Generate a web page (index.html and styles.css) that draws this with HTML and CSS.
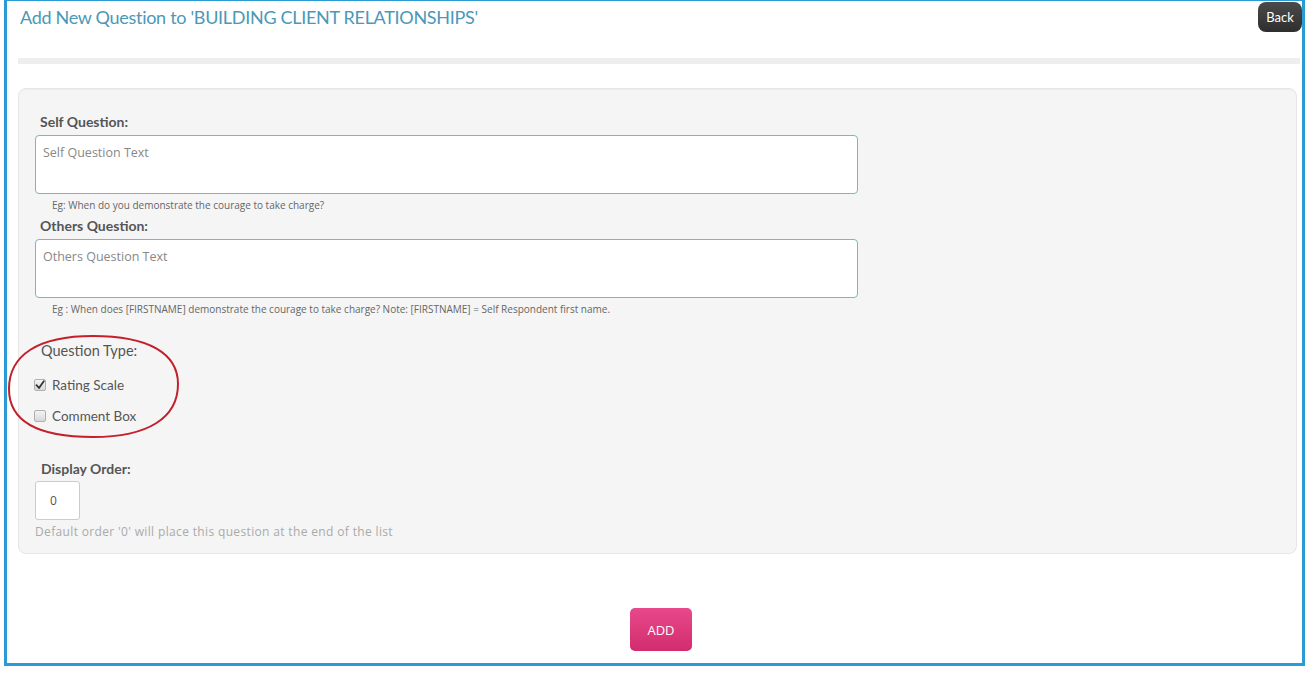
FILE: index.html
```html
<!DOCTYPE html>
<html>
<head>
    <title>Add New Question</title>
    <link rel="stylesheet" href="styles.css">
</head>
<body>
    <div class="frame">
        <div class="page-header">
            <h1>Add New Question to 'BUILDING CLIENT RELATIONSHIPS'</h1>
            <a class="back-btn" href="#">Back</a>
        </div>
        <div class="rule"></div>

        <form class="question-form">
            <div class="well">
                <label class="field-label" for="self-question">Self Question:</label>
                <textarea id="self-question" class="text-box" placeholder="Self Question Text"></textarea>
                <div class="hint">Eg: When do you demonstrate the courage to take charge?</div>

                <label class="field-label" for="others-question">Others Question:</label>
                <textarea id="others-question" class="text-box" placeholder="Others Question Text"></textarea>
                <div class="hint">Eg : When does [FIRSTNAME] demonstrate the courage to take charge? Note: [FIRSTNAME] = Self Respondent first name.</div>

                <div class="type-label">Question Type:</div>
                <label class="check-row first">
                    <span class="check-box checked">
                        <svg width="10" height="10" viewBox="0 0 10 10"><path d="M1.5 5.2 L4 8 L8.8 1.2" fill="none" stroke="#333" stroke-width="1.8" stroke-linecap="round" stroke-linejoin="round"/></svg>
                    </span>
                    Rating Scale
                </label>
                <label class="check-row">
                    <span class="check-box"></span>
                    Comment Box
                </label>

                <label class="field-label order-label" for="display-order">Display Order:</label>
                <input id="display-order" class="order-input" type="text" value="0">
                <div class="help">Default order '0' will place this question at the end of the list</div>
            </div>

            <div class="actions">
                <button type="submit" class="add-btn">ADD</button>
            </div>
        </form>

        <!-- red hand-drawn circle round the question type -->
        <svg class="mark" width="174" height="106" viewBox="0 0 174 106">
            <path d="M2 55 C2 21, 31 2, 86 2 C141 2, 171 19, 171 50 C171 84, 141 103, 86 103 C31 103, 2 88, 2 55 Z" fill="none" stroke="#c4202b" stroke-width="2"/>
        </svg>
    </div>
</body>
</html>
```

FILE: styles.css
```css
body {
    margin: 0;
    background-color: #fff;
    font-family: Lato, "Open Sans", sans-serif;
    color: #555;
}

.frame {
    position: relative;
    box-sizing: border-box;
    width: 1301px;
    height: 666px;
    margin-left: 4px;
    border: 3px solid #2b9bd6;
    border-top-width: 1px;
}

.page-header {
    display: flex;
    justify-content: space-between;
    align-items: flex-start;
    padding-top: 1px;
}

h1 {
    margin: 0 0 0 13px;
    font-family: Lato, sans-serif;
    font-size: 18px;
    font-weight: normal;
    letter-spacing: -0.3px;
    line-height: 30px;
    color: #4b98b8;
}

.back-btn {
    display: block;
    width: 44px;
    height: 30px;
    line-height: 30px;
    text-align: center;
    border-radius: 8px;
    background: linear-gradient(#4a4a4a, #2e2e2e);
    color: #fff;
    font-size: 13px;
    text-decoration: none;
}

.rule {
    height: 6px;
    margin: 26px 2px 0 11px;
    background-color: #eeeeee;
}

.question-form {
    margin: 0;
}

.well {
    margin: 24px 5px 0 11px;
    padding: 23px 16px 13px 16px;
    background-color: #f5f5f5;
    border: 1px solid #e6e6e6;
    border-radius: 8px;
    box-shadow: inset 0 1px 1px rgba(0, 0, 0, 0.03);
}

.field-label {
    display: block;
    padding-left: 5px;
    font-size: 14px;
    font-weight: bold;
    line-height: 20px;
    color: #555;
}

.text-box {
    display: block;
    box-sizing: border-box;
    width: 823px;
    height: 59px;
    margin-top: 3px;
    padding: 8px 7px;
    border: 1px solid #7db5c1;
    border-radius: 4px;
    background-color: #fff;
    font-family: "Open Sans", sans-serif;
    font-size: 12.5px;
    resize: none;
    outline: none;
}

.text-box::placeholder {
    color: #888;
}

.hint {
    margin-top: 4px;
    margin-bottom: 4px;
    padding-left: 17px;
    font-family: "Open Sans", sans-serif;
    font-size: 10px;
    line-height: 14px;
    color: #666;
}

.type-label {
    margin-top: 25px;
    padding-left: 6px;
    font-size: 14.5px;
    line-height: 20px;
    color: #555;
}

.check-row {
    display: flex;
    align-items: center;
    gap: 6px;
    margin-top: 11px;
    height: 20px;
    font-size: 13.5px;
    color: #555;
}

.check-row.first {
    margin-top: 14px;
}

.check-box {
    display: flex;
    align-items: center;
    justify-content: center;
    box-sizing: border-box;
    width: 12px;
    height: 12px;
    margin-left: -1px;
    border: 1px solid #b0b0b0;
    border-radius: 2px;
    background: linear-gradient(#f4f4f4, #d8d8d8);
}

.order-label {
    margin-top: 33px;
    padding-left: 6px;
}

.order-input {
    display: block;
    box-sizing: border-box;
    width: 45px;
    height: 39px;
    margin-top: 2px;
    padding-left: 14px;
    border: 1px solid #ccc;
    border-radius: 3px;
    background-color: #fff;
    font-family: "Open Sans", sans-serif;
    font-size: 12px;
    color: #555;
    outline: none;
}

.help {
    margin-top: 4px;
    font-family: "Open Sans", sans-serif;
    font-size: 12px;
    letter-spacing: 0.35px;
    line-height: 16px;
    color: #aaa;
}

.actions {
    margin-top: 54px;
    padding-left: 13px;
    text-align: center;
}

.add-btn {
    width: 62px;
    height: 43px;
    border: none;
    border-radius: 5px;
    background: linear-gradient(#e8498a, #d22c6e);
    color: #fff;
    font-family: "Open Sans", sans-serif;
    font-size: 13px;
    cursor: pointer;
}

.mark {
    position: absolute;
    left: 0;
    top: 333px;
}
```
